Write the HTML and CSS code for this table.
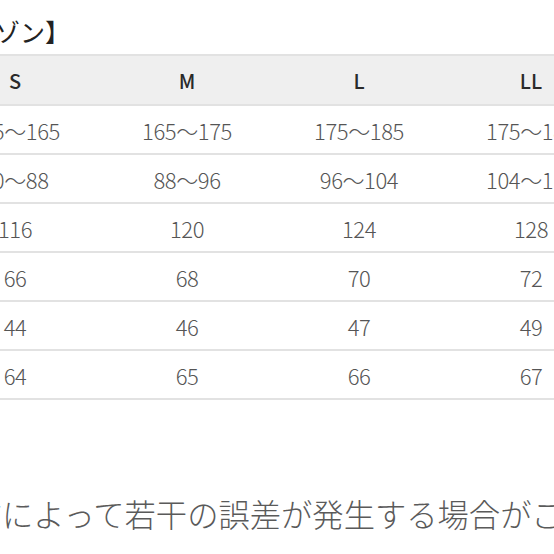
FILE: index.html
```html
<!DOCTYPE html>
<html lang="ja">
<head>
<meta charset="utf-8">
<link rel="stylesheet" href="styles.css">
</head>
<body>
<div class="page">
  <h2 class="title">【アマゾン】</h2>
  <div class="table">
    <div class="row head"><span>S</span><span>M</span><span>L</span><span>LL</span><span>3L</span></div>
    <div class="row"><span>155〜165</span><span>165〜175</span><span>175〜185</span><span>175〜185</span><span>180〜190</span></div>
    <div class="row"><span>80〜88</span><span>88〜96</span><span>96〜104</span><span>104〜112</span><span>112〜120</span></div>
    <div class="row"><span>116</span><span>120</span><span>124</span><span>128</span><span>132</span></div>
    <div class="row"><span>66</span><span>68</span><span>70</span><span>72</span><span>74</span></div>
    <div class="row"><span>44</span><span>46</span><span>47</span><span>49</span><span>50</span></div>
    <div class="row"><span>64</span><span>65</span><span>66</span><span>67</span><span>68</span></div>
  </div>
  <p class="note">測り方によって若干の誤差が発生する場合がございます。</p>
</div>
</body>
</html>
```
FILE: styles.css
```css
html, body {
  margin: 0;
  padding: 0;
  background: #ffffff;
}
.page {
  width: 554px;
  height: 554px;
  overflow: hidden;
  font-family: "Noto Sans CJK JP", "Noto Sans", sans-serif;
}
.title {
  margin: 0 0 0 -80px;
  padding-top: 14px;
  font-size: 25px;
  line-height: 34px;
  font-weight: 400;
  color: #222;
  white-space: nowrap;
}
.table {
  margin: 6px 0 0 -71px;
  width: 860px;
  border-top: 2px solid #e2e2e2;
}
.row {
  display: grid;
  grid-template-columns: repeat(5, 172px);
  align-items: center;
  height: 49px;
  box-sizing: border-box;
  border-bottom: 2px solid #e2e2e2;
  color: #555;
  font-size: 22px;
  font-weight: 300;
  letter-spacing: -0.4px;
}
.row span {
  text-align: center;
  white-space: nowrap;
}
.row.head {
  height: 50px;
  background: #efefef;
  color: #2a2a2a;
  font-size: 20px;
  font-weight: 500;
  letter-spacing: 0;
}
.note {
  margin: 94px 0 0 -92px;
  font-size: 31.3px;
  line-height: 40px;
  color: #5a5a5a;
  font-weight: 300;
  white-space: nowrap;
}
```
